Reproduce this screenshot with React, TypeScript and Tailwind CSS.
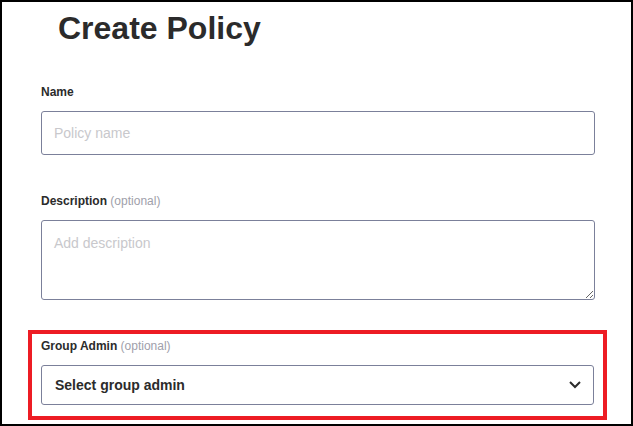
import React from 'react';

const App: React.FC = () => {
    return (
        <div className="h-[426px] w-[633px] overflow-hidden border-2 border-black bg-white font-[Liberation_Sans,Arial,sans-serif] text-[#2b2b2b]">
            <h1 className="ml-[56px] mt-[8px] text-[32px] font-bold leading-[36px]">Create Policy</h1>

            <div className="ml-[39px] mr-[36px] mt-[39px]">
                <label className="block text-[12px] font-bold leading-[14px]">Name</label>
                <input
                    placeholder="Policy name"
                    className="mt-[12px] block h-[44px] w-full rounded-[3px] border border-[#7b809a] px-[12px] font-[Liberation_Sans,Arial,sans-serif] text-[14px] placeholder:text-[#c8c8cc] outline-none"
                />

                <label className="mt-[39px] block text-[12px] font-bold leading-[14px]">
                    Description <span className="font-normal text-[#a0a0aa]">(optional)</span>
                </label>
                <textarea
                    placeholder="Add description"
                    className="mt-[12px] block h-[80px] w-full rounded-[3px] border border-[#7b809a] px-[12px] py-[12px] font-[Liberation_Sans,Arial,sans-serif] text-[14px] placeholder:text-[#c8c8cc] outline-none"
                />
            </div>

            <div className="ml-[26px] mr-[24px] mt-[30px] border-4 border-[#ed1c24] px-[9px] pb-[11px] pt-[5px]">
                <label className="block text-[12px] font-bold leading-[14px]">
                    Group Admin <span className="font-normal text-[#a0a0aa]">(optional)</span>
                </label>
                <div className="mt-[12px] flex h-[40px] items-center justify-between rounded-[3px] border border-[#7b809a] pl-[13px] pr-[12px]">
                    <span className="text-[14px] font-bold">Select group admin</span>
                    <svg width="12" height="8" viewBox="0 0 12 8" fill="none" stroke="#2b2b2b" strokeWidth="2">
                        <path d="M1 1l5 5 5-5" />
                    </svg>
                </div>
            </div>
        </div>
    );
};

export default App;
